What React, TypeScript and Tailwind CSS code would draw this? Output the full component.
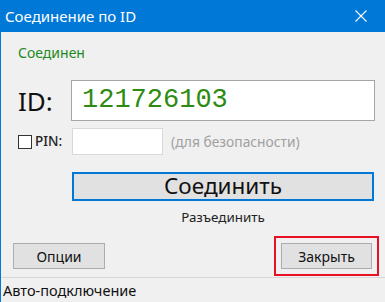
import React from 'react';

const App: React.FC = () => {
  return (
    <div className="w-[385px] h-[302px] bg-[#f0f0f0] flex flex-col overflow-hidden" style={{ fontFamily: '"Noto Sans", "Open Sans", sans-serif' }}>
      {/* Title bar */}
      <div className="h-[32px] shrink-0 bg-[#0078d7] flex items-center justify-between pl-[5px]">
        <span className="text-white text-[15px] leading-none">Соединение по ID</span>
        <div className="w-[46px] h-[32px] flex items-center justify-center mr-[1px]">
          <svg width="12" height="12" viewBox="0 0 12 12" fill="none">
            <path d="M0.5 0.5L11.5 11.5M11.5 0.5L0.5 11.5" stroke="#fff" strokeWidth="1.1" />
          </svg>
        </div>
      </div>

      {/* Body */}
      <div className="flex-1 border-l border-[#0078d7] flex flex-col">
        <div className="h-[245px] flex flex-col pl-[17px] pr-[10px]">
          <div className="mt-[13px] h-[16px] flex items-center text-[14px] text-[#1f8a1f] leading-none">Соединен</div>

          {/* ID row */}
          <div className="mt-[19px] flex items-center">
            <span className="w-[53px] text-[26px] leading-none text-[#111]">ID:</span>
            <div className="w-[304px] h-[41px] bg-white border border-[#a5a5a5] flex items-center pl-[10px]">
              <span className="text-[27px] leading-none text-[#2e8b12]" style={{ fontFamily: '"Liberation Mono", monospace' }}>121726103</span>
            </div>
          </div>

          {/* PIN row */}
          <div className="mt-[7px] flex items-center">
            <div className="w-[14px] h-[14px] border border-[#333] bg-white" />
            <span className="ml-[3px] w-[37px] text-[13.5px] font-medium leading-none text-[#222]">PIN:</span>
            <div className="w-[91px] h-[27px] bg-white border border-[#d9d9d9]" />
            <span className="ml-[8px] text-[13.8px] leading-none text-[#a0a0a0]">(для безопасности)</span>
          </div>

          {/* Connect */}
          <div className="mt-[17px] ml-[54px] w-[302px] h-[29px] bg-[#e1e1e1] border-2 border-[#0078d7] flex items-center justify-center">
            <span className="text-[22.5px] leading-none text-[#111]">Соединить</span>
          </div>
          <div className="mt-[10px] ml-[54px] w-[302px] text-center text-[13.4px] leading-none text-[#222]">Разъединить</div>

          {/* Bottom buttons */}
          <div className="mt-[12px] flex items-center justify-between">
            <div className="-ml-[5px] w-[92px] h-[26px] bg-[#e1e1e1] border border-[#adadad] flex items-center justify-center text-[14px] text-[#111]">Опции</div>
            <div className="-mr-[4px] border-2 border-[#e81123] p-[5px]">
              <div className="w-[91px] h-[26px] bg-[#e1e1e1] border border-[#adadad] flex items-center justify-center text-[14px] text-[#111]">Закрыть</div>
            </div>
          </div>
        </div>

        {/* Status bar */}
        <div className="flex-1 border-t border-[#d7d7d7] flex items-center pl-[2px] text-[14.5px] text-[#111] leading-none">Авто-подключение</div>
      </div>
    </div>
  );
};

export default App;
